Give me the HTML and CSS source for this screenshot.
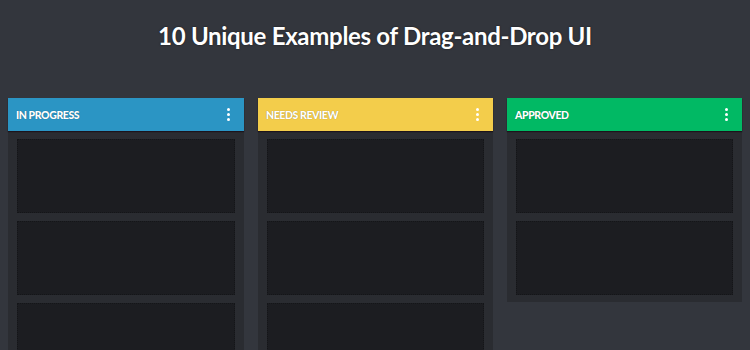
FILE: index.html
```html
<!DOCTYPE html>
<html>
<head>
<meta charset="utf-8">
<link rel="stylesheet" href="styles.css">
</head>
<body>
<main class="page">
<h1 class="title">10 Unique Examples of Drag-and-Drop UI</h1>
<div class="board">
  <section class="column">
    <header class="col-head blue"><span>IN PROGRESS</span><span class="kebab"><i></i><i></i><i></i></span></header>
    <div class="cards">
      <div class="card"></div>
      <div class="card"></div>
      <div class="card"></div>
    </div>
  </section>
  <section class="column">
    <header class="col-head yellow"><span>NEEDS REVIEW</span><span class="kebab"><i></i><i></i><i></i></span></header>
    <div class="cards">
      <div class="card"></div>
      <div class="card"></div>
      <div class="card"></div>
    </div>
  </section>
  <section class="column">
    <header class="col-head green"><span>APPROVED</span><span class="kebab"><i></i><i></i><i></i></span></header>
    <div class="cards">
      <div class="card"></div>
      <div class="card"></div>
    </div>
  </section>
</div>
</main>
</body>
</html>
```
FILE: styles.css
```css
html, body {
  margin: 0;
  padding: 0;
  background: #33363d;
  font-family: Lato, "Open Sans", sans-serif;
}
.page {
  height: 350px;
  overflow: hidden;
}
.title {
  margin: 0;
  padding-top: 20px;
  height: 98px;
  box-sizing: border-box;
  text-align: center;
  color: #fff;
  font-size: 24px;
  font-weight: 700;
  letter-spacing: -0.3px;
  line-height: 32px;
  text-shadow: 0 0 2px rgba(0,0,0,0.6);
}
.board {
  display: grid;
  grid-template-columns: 236px 235px 235px;
  column-gap: 14px;
  padding-left: 8px;
  align-items: start;
}
.column {
  background: #2a2c31;
}
.col-head {
  height: 33px;
  display: flex;
  align-items: center;
  justify-content: space-between;
  padding: 0 14px 0 8px;
  color: #fff;
  font-size: 10.5px;
  font-weight: 900;
  letter-spacing: -0.4px;
  box-shadow: 0 1px 1px #1d141c;
  text-shadow: 0 0 1px rgba(0,0,0,0.4);
}
.blue { background: #2b95c4; }
.yellow { background: #f3cd4b; }
.green { background: #01b964; }
.kebab {
  display: flex;
  flex-direction: column;
  gap: 2px;
}
.kebab i {
  width: 3px;
  height: 3px;
  border-radius: 50%;
  background: #fff;
}
.cards {
  display: flex;
  flex-direction: column;
  gap: 8px;
  padding: 8px 9px 7px;
}
.card {
  height: 74px;
  background: #1c1d21;
  border: 1px dotted #141518;
  box-sizing: border-box;
}
```
